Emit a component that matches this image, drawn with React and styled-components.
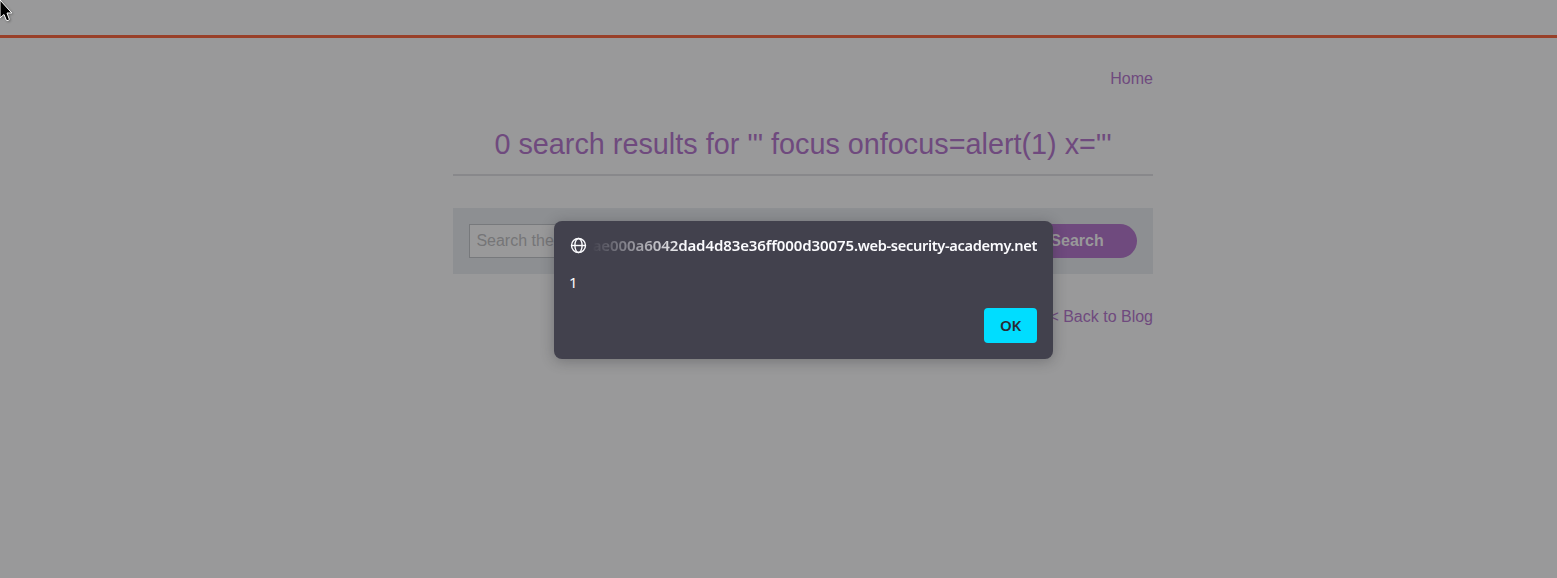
import React from "react";
import styled, { createGlobalStyle } from "styled-components";

const GlobalStyle = createGlobalStyle`
  *, *::before, *::after { box-sizing: border-box; }
  html, body { margin: 0; height: 100%; overflow: hidden; background: #99999a; }
`;

const Page = styled.div`
  position: relative;
  height: 578px;
  overflow: hidden;
  background: #99999a;
  color: #6f4a7e;
  font: 16px/18px "Liberation Sans", Arial, sans-serif;
`;

const LabHeader = styled.header`
  height: 38px;
  border-bottom: 3px solid #994029;
`;

const Content = styled.main`
  width: 700px;
  margin-left: 453px;
  padding-top: 32px;
`;

const LinkRow = styled.nav`
  display: flex;
  justify-content: flex-end;
`;

const Link = styled.a`
  color: #6f4a7e;
  text-decoration: none;
`;

const ResultHeader = styled.section`
  height: 88px;
  padding-top: 39px;
  border-bottom: 2px solid #88888b;
  text-align: center;
`;

const Title = styled.h1`
  margin: 0;
  font-size: 28.8px;
  line-height: 34px;
  font-weight: 400;
  white-space: nowrap;
`;

const SearchBar = styled.form`
  display: flex;
  height: 66px;
  margin: 32px 0 34px;
  padding: 16px;
  background: #8d8f92;
`;

const SearchInput = styled.input`
  flex: 1;
  min-width: 0;
  height: 34px;
  padding: 0 6.4px;
  border: 1px solid #77797c;
  border-radius: 0;
  background: #99999a;
  font: inherit;
  outline: none;
  &::placeholder { color: #757577; opacity: 1; }
`;

const SearchButton = styled.button`
  width: 120px;
  height: 34px;
  padding: 0;
  border: 0;
  border-radius: 0 17px 17px 0;
  background: #6f4a7e;
  color: #99999a;
  font: bold 16px/34px "Liberation Sans", Arial, sans-serif;
`;

const Dialog = styled.div`
  position: absolute;
  top: 221px;
  left: 554px;
  width: 499px;
  height: 138px;
  padding: 15px 16px 16px;
  border-radius: 8px;
  background: #42414d;
  box-shadow: 0 2px 14px rgba(28, 27, 34, 0.3);
  color: #fbfbfe;
  font: 15px/20px "Noto Sans", sans-serif;
`;

const Origin = styled.div`
  display: flex;
  align-items: center;
  gap: 4px;
  height: 18px;
`;

const GlobeIcon = styled.svg`
  flex: none;
  display: block;
  width: 17px;
  height: 17px;
`;

const Host = styled.span`
  display: flex;
  justify-content: flex-end;
  align-items: baseline;
  flex: 1;
  min-width: 0;
  white-space: nowrap;
  font-weight: 600;
  mask-image: linear-gradient(to right, transparent, #000 96px);
`;

const LabId = styled.span`
  letter-spacing: -0.09px;
`;

const Domain = styled.span`
  font-size: 14.6px;
  letter-spacing: -0.33px;
`;

const Message = styled.p`
  margin: 18px 0 0 -1px;
`;

const Actions = styled.div`
  display: flex;
  justify-content: flex-end;
  margin-top: 16px;
`;

const OkButton = styled.button`
  width: 53px;
  height: 35px;
  padding: 0;
  border: 0;
  border-radius: 4px;
  background: #00ddff;
  color: #2b2a33;
  font: 600 15px/35px "Noto Sans", sans-serif;
  letter-spacing: -0.3px;
`;

const Cursor = styled.svg`
  position: absolute;
  top: 0;
  left: 0;
  width: 13px;
  height: 22px;
  filter: drop-shadow(1px 1px 1px rgba(0, 0, 0, 0.3));
  overflow: visible;
`;

export default function App() {
  return (
    <Page>
      <GlobalStyle />
      <LabHeader />
      <Content>
        <LinkRow><Link>Home</Link></LinkRow>
        <ResultHeader>
          <Title>0 search results for '" focus onfocus=alert(1) x="'</Title>
        </ResultHeader>
        <SearchBar onSubmit={(e) => e.preventDefault()}>
          <SearchInput placeholder="Search the blog..." />
          <SearchButton type="submit">Search</SearchButton>
        </SearchBar>
        <LinkRow><Link>&lt; Back to Blog</Link></LinkRow>
      </Content>
      <Dialog role="dialog">
        <Origin>
          <GlobeIcon viewBox="0 0 17 17" fill="none" stroke="#fbfbfe" strokeWidth="1.4">
            <circle cx="8.5" cy="8.5" r="7" />
            <ellipse cx="8.5" cy="8.5" rx="3.6" ry="7" />
            <path d="M1.5 8.5h14" />
          </GlobeIcon>
          <Host>
            <LabId>ae000a6042dad4d83e36ff000d30075</LabId>
            <Domain>.web-security-academy.net</Domain>
          </Host>
        </Origin>
        <Message>1</Message>
        <Actions><OkButton>OK</OkButton></Actions>
      </Dialog>
      <Cursor viewBox="0 0 13 22">
        <path
          d="M0 0V17.8L4 14.5L6.4 20.3Q8 21.3 9.4 19.5L7 13H11.8Z"
          fill="#000"
          stroke="#fff"
          strokeWidth="1"
        />
      </Cursor>
    </Page>
  );
}
